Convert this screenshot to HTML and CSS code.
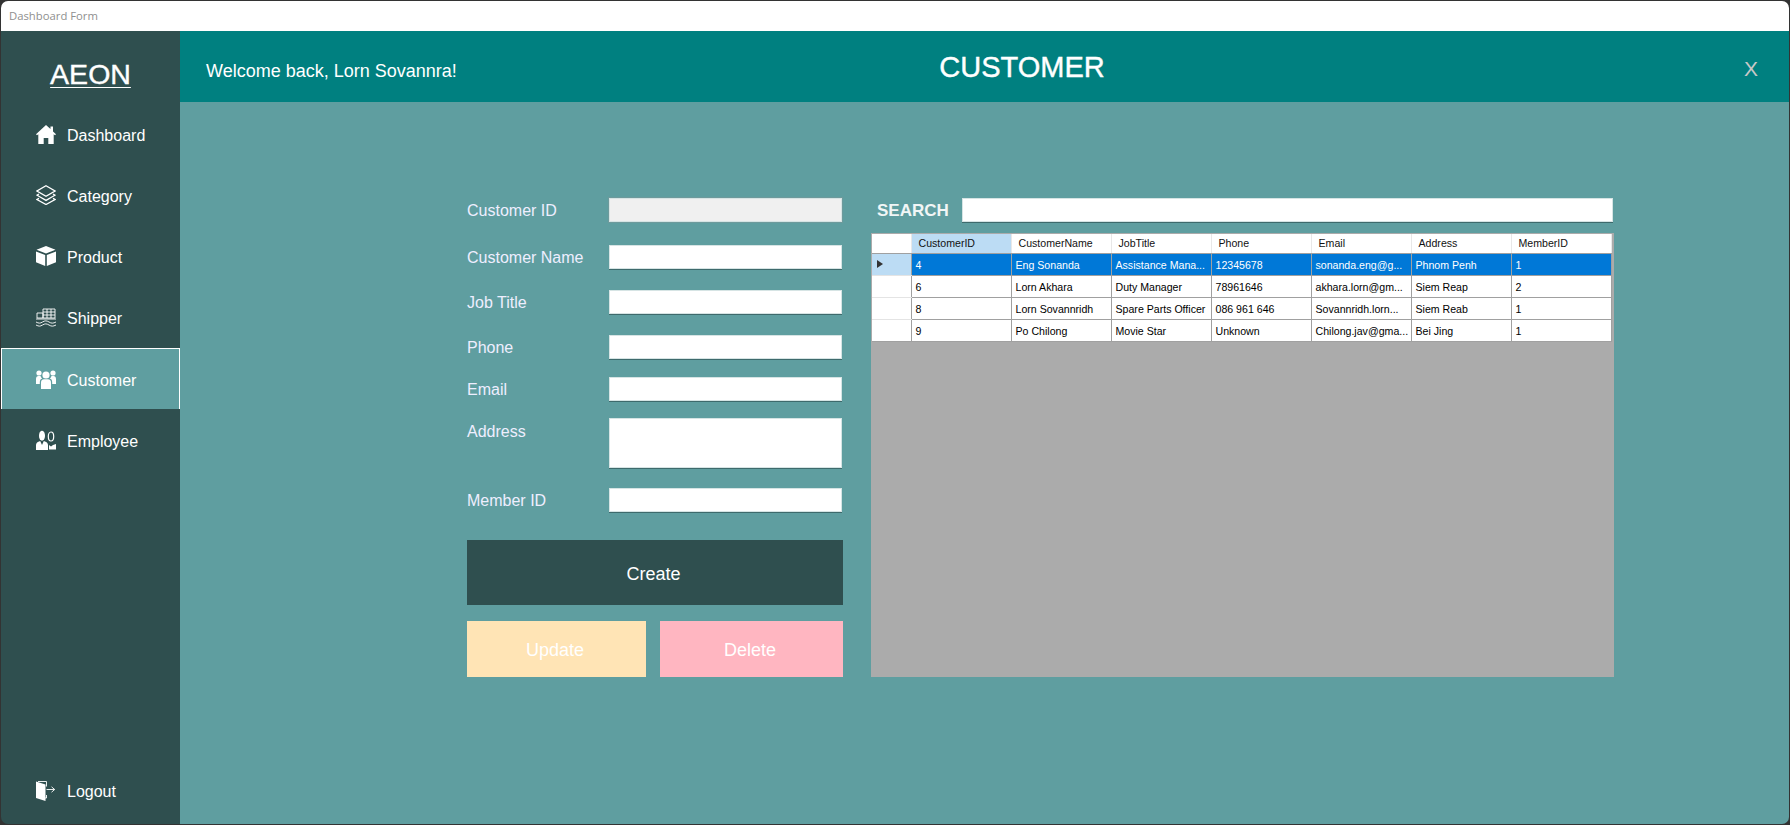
FILE: index.html
```html
<!doctype html>
<html lang="en">
<head>
<title>Dashboard Form</title>
<meta charset="utf-8">
<link rel="stylesheet" href="styles.css">
</head>
<body>

<div class="window">

	<div class="titlebar">Dashboard Form</div>

	<div class="frame">

		<div class="sidebar">
			<div class="logo">AEON</div>

			<a class="navitem" href="#">
				<svg class="navicon" viewBox="0 0 20 20"><path fill="#fff" d="M10 1 0 10.200l1 1 1.300-1V20h5.400v-6h4.600v6h5.400v-9.800l1.300 1 1-1L17 7.400V2.500h-2.500v2.600z"/></svg>
				<span>Dashboard</span>
			</a>
			<a class="navitem" href="#">
				<svg class="navicon" viewBox="0 0 20 20" fill="none" stroke="#fff" stroke-width="1.300"><path d="M10 .8 19 6l-9 5.200L1 6z"/><path d="M3 9 1 10.200l9 5.200 9-5.200L17 9"/><path d="M3 13.300 1 14.500l9 5 9-5-2-1.200"/></svg>
				<span>Category</span>
			</a>
			<a class="navitem" href="#">
				<svg class="navicon" viewBox="0 0 20 20"><path fill="#fff" d="M10 0 19.500 3.800 10 7.600.5 3.800zM0 5.400l9.200 3.700V20L0 16.200zM20 5.400v10.800L10.800 20V9.100z"/></svg>
				<span>Product</span>
			</a>
			<a class="navitem" href="#">
				<svg class="navicon" viewBox="0 0 20 20" fill="none" stroke="#fff" stroke-width=".9"><path d="M7 2h12v9H7zM11 2v9M15 2v9M7 5h12M7 8h12M1 6h6v5H1z"/><path d="M0 12h20M0 15c3 1.500 4 1.500 6.500 0s4-1.500 6.500 0 4 1.500 7 0M0 18c3 1.500 4 1.500 6.500 0s4-1.500 6.500 0 4 1.500 7 0"/></svg>
				<span>Shipper</span>
			</a>
			<a class="navitem active" href="#">
				<svg class="navicon" viewBox="0 0 20 20"><g fill="#fff"><circle cx="10" cy="6" r="3.600"/><circle cx="3" cy="4" r="2.600"/><circle cx="17" cy="4" r="2.600"/><path d="M5 20v-6.500C5 11 6.500 10.300 8 10.300h4c1.500 0 3 .7 3 3.200V20z"/><path d="M0 15v-5c0-2 1-3 2.500-3h2c.3 1 .9 2 1.700 2.600C4.500 10 3.800 11.500 3.800 13.500V15zM20 15v-5c0-2-1-3-2.500-3h-2c-.3 1-.9 2-1.700 2.600 1.700.4 2.400 1.900 2.400 3.900V15z"/></g></svg>
				<span>Customer</span>
			</a>
			<a class="navitem" href="#">
				<svg class="navicon" viewBox="0 0 20 20"><g fill="#fff"><ellipse cx="6" cy="5.800" rx="3" ry="5"/><path d="M0 20v-5c0-2 1.500-3.300 4.200-4l1.800 4 1.800-4c2.700.7 4.200 2 4.200 4v5z"/><path d="M13 15l2 1.500 2-1.500 3-1v5.500h-7z"/></g><ellipse cx="15" cy="6.500" rx="2.700" ry="4.500" fill="none" stroke="#fff" stroke-width="1.200"/></svg>
				<span>Employee</span>
			</a>

			<a class="navitem logout" href="#">
				<svg class="navicon" viewBox="0 0 20 20"><path fill="#fff" d="M0 .5 9.500 3.500V20L0 17z"/><path d="M2 .5h8.500v5M10.500 14v3H9M10.500 8.500h8M15.500 5.800l3.200 2.700-3.200 2.700" fill="none" stroke="#fff" stroke-width=".9"/></svg>
				<span>Logout</span>
			</a>
		</div>

		<div class="main">

			<div class="header">
				<div class="welcome">Welcome back, Lorn Sovannra!</div>
				<div class="pagetitle">CUSTOMER</div>
				<div class="closex">X</div>
			</div>

			<div class="content">

				<div class="formcol">
					<div class="fields">
						<label class="fieldlabel">Customer ID</label>
						<input class="textbox readonly" type="text" readonly>
						<label class="fieldlabel">Customer Name</label>
						<input class="textbox" type="text">
						<label class="fieldlabel">Job Title</label>
						<input class="textbox" type="text">
						<label class="fieldlabel">Phone</label>
						<input class="textbox" type="text">
						<label class="fieldlabel">Email</label>
						<input class="textbox" type="text">
						<label class="fieldlabel toplabel">Address</label>
						<textarea class="textbox area"></textarea>
						<label class="fieldlabel">Member ID</label>
						<input class="textbox" type="text">
					</div>

					<button class="btn create">Create</button>

					<div class="btnrow">
						<button class="btn update">Update</button>
						<button class="btn delete">Delete</button>
					</div>
				</div>

				<div class="gridcol">
					<div class="searchrow">
						<label class="searchlabel">SEARCH</label>
						<input class="textbox search" type="text">
					</div>

					<div class="gridview">
						<table class="datagrid">
							<thead>
								<tr>
									<th class="rowhead"></th>
									<th class="selhead">CustomerID</th>
									<th>CustomerName</th>
									<th>JobTitle</th>
									<th>Phone</th>
									<th>Email</th>
									<th>Address</th>
									<th>MemberID</th>
								</tr>
							</thead>
							<tbody>
								<tr class="selected">
									<td class="rowhead"><span class="rowarrow"></span></td>
									<td>4</td><td>Eng Sonanda</td><td>Assistance Mana...</td><td>12345678</td><td>sonanda.eng@g...</td><td>Phnom Penh</td><td>1</td>
								</tr>
								<tr>
									<td class="rowhead"></td>
									<td>6</td><td>Lorn Akhara</td><td>Duty Manager</td><td>78961646</td><td>akhara.lorn@gm...</td><td>Siem Reap</td><td>2</td>
								</tr>
								<tr>
									<td class="rowhead"></td>
									<td>8</td><td>Lorn Sovannridh</td><td>Spare Parts Officer</td><td>086 961 646</td><td>Sovannridh.lorn...</td><td>Siem Reab</td><td>1</td>
								</tr>
								<tr>
									<td class="rowhead"></td>
									<td>9</td><td>Po Chilong</td><td>Movie Star</td><td>Unknown</td><td>Chilong.jav@gma...</td><td>Bei Jing</td><td>1</td>
								</tr>
							</tbody>
						</table>
					</div>
				</div>

			</div>
		</div>
	</div>
</div>

</body>
</html>
```
FILE: styles.css
```css
* { margin: 0; padding: 0; box-sizing: border-box; }
html, body { height: 100%; overflow: hidden; background: #333; }
body { padding: 1px; font-family: "Liberation Sans", Arial, sans-serif; color: #fff; }

.window {
	height: 100%;
	display: flex; flex-direction: column;
	border-radius: 7px;
	overflow: hidden;
}

.titlebar {
	height: 30px; flex: none;
	background: #fff;
	color: #8f8f8f;
	font-family: "Open Sans", sans-serif;
	font-size: 11.3px;
	line-height: 30px;
	padding-left: 8px;
}

.frame { flex: 1; display: flex; min-height: 0; }

/* sidebar */
.sidebar {
	width: 179px; flex: none;
	background: #2f4f4f;
	display: flex; flex-direction: column;
}
.logo {
	height: 72px;
	padding-top: 28px;
	text-align: center;
	font-size: 28.5px;
	line-height: 31px;
	-webkit-text-stroke: .4px #fff;
	text-decoration: underline;
	text-decoration-thickness: 1px;
	text-underline-offset: 3px;
}
.navitem {
	height: 61.25px;
	display: flex; align-items: center;
	gap: 11px;
	padding-left: 35px;
	color: #fff;
	text-decoration: none;
	font-size: 16px;
}
.navitem > span { padding-top: 4px; }
.navitem.active {
	background: #5f9ea0;
	border: 1px solid #fff;
	border-bottom: none;
	padding-left: 34px;
}
.navicon { width: 20px; height: 20px; flex: none; }
.logout { margin-top: auto; height: 66px; }
.logout > span { padding-top: 2px; }

/* header */
.main { flex: 1; display: flex; flex-direction: column; min-width: 0; }
.header {
	height: 71px; flex: none;
	background: #008080;
	position: relative;
	display: flex; align-items: center; justify-content: space-between;
	padding: 0 31px 0 26px;
}
.welcome { font-size: 18px; padding-top: 10px; }
.pagetitle {
	position: absolute;
	left: 75px; right: 0; top: 21px;
	text-align: center;
	font-size: 29px;
	line-height: 31px;
	-webkit-text-stroke: .4px #fff;
}
.closex { font-size: 21px; color: #c8c8c8; padding-top: 5px; }

/* content */
.content {
	flex: 1;
	background: #5f9ea0;
	display: flex;
	align-items: flex-start;
	padding: 96px 0 0 287px;
	gap: 28px;
}

.formcol { width: 376px; flex: none; }

.fields {
	display: grid;
	grid-template-columns: 142px 233px;
	grid-template-rows: 47px 45px 45px 42px 41px 70px 52px;
	align-items: start;
}
.fieldlabel { font-size: 16px; line-height: 24px; padding-top: 1px; color: #eef; }
.fieldlabel.toplabel { line-height: 25px; }

.textbox {
	display: block;
	width: 233px; height: 24px;
	background: #fff;
	border: 1px solid #d6e4e4;
	box-shadow: 0 1px 0 #3e6a6c;
	outline: none;
	resize: none;
	font-family: "Liberation Sans", sans-serif;
}
.textbox.readonly {
	background: #f0f0f0;
	border-color: #d6e4e4;
	box-shadow: 0 0 0 1px #6e9a9c;
}
.textbox.area { height: 50px; }

.btn {
	display: block;
	border: none;
	color: #fff;
	font-family: "Liberation Sans", sans-serif;
	font-size: 18px;
	padding: 3px 3px 0 0;
}
.create { width: 376px; height: 65px; background: #2f4f4f; }
.btnrow { display: flex; justify-content: space-between; margin-top: 16px; }
.update { width: 179px; height: 56px; background: #ffe4b5; }
.delete { width: 183px; height: 56px; background: #ffb6c1; }

/* search + grid */
.gridcol { width: 743px; flex: none; }
.searchrow {
	display: flex; align-items: center;
	height: 24px;
	padding-left: 6px;
	gap: 12px;
}
.searchlabel { font-size: 17px; font-weight: bold; padding-top: 2px; color: #f1f6f6; width: 73px; flex: none; }
.textbox.search { flex: none; width: 651px; }

.gridview {
	margin-top: 11px;
	height: 444px;
	background: #ababab;
	padding: 1px 2px 0 1px;
}
.datagrid {
	border-collapse: collapse;
	table-layout: fixed;
	width: 739px;
	font-size: 10.6px;
	color: #000;
	background: #fff;
}
.datagrid th, .datagrid td {
	width: 100px;
	font-weight: normal;
	text-align: left;
	white-space: nowrap;
	overflow: hidden;
}
.datagrid th {
	height: 19px;
	padding-left: 7px;
	border-right: 1px solid #e8e8e8;
	border-bottom: 1px solid #a0a0a0;
	color: #111;
}
.datagrid td {
	height: 22px;
	padding: 1px 0 0 4px;
	border-right: 1px solid #a0a0a0;
	border-bottom: 1px solid #a0a0a0;
}
.datagrid .rowhead {
	width: 39px;
	padding: 0;
	background: #fff;
	border-right: 1px solid #a0a0a0;
	border-bottom-color: #e4e4e4;
}
.datagrid thead .rowhead { border-right-color: #e8e8e8; border-bottom-color: #a0a0a0; }
.datagrid tr:last-child .rowhead { border-bottom-color: #a0a0a0; }
.datagrid .selhead { background: #bcdcf4; }
.selected td { background: #0078d7; color: #fff; border-bottom-color: #a0a0a0; }
.datagrid .selected .rowhead { background: #bcdcf4; }
.rowarrow {
	display: block;
	width: 0; height: 0;
	margin-left: 5px;
	border-left: 6px solid #333;
	border-top: 4px solid transparent;
	border-bottom: 4px solid transparent;
}
```
